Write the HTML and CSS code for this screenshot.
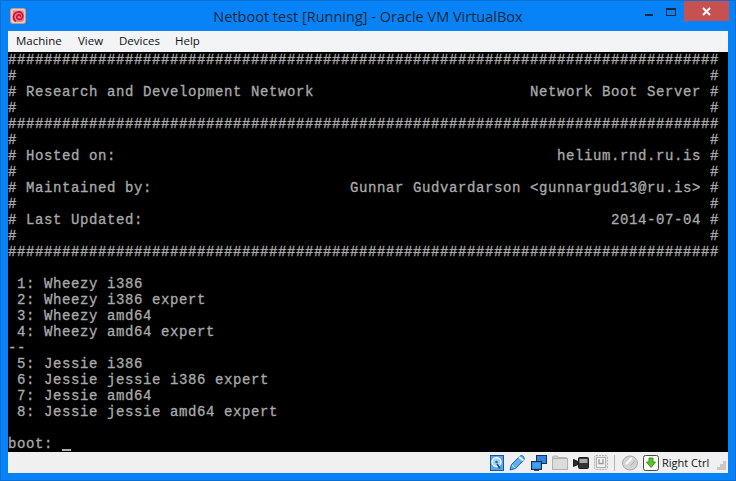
FILE: index.html
```html
<!DOCTYPE html>
<html lang="en">
<head>
<meta charset="utf-8">
<title>Netboot test [Running] - Oracle VM VirtualBox</title>
<link rel="stylesheet" href="styles.css">
</head>
<body>
<div class="window">
  <header class="titlebar">
    <svg class="app-icon" viewBox="0 0 16 16" width="16" height="16">
      <rect x="0.5" y="0.5" width="15" height="15" rx="2" fill="#eccabc" stroke="#b8a08f"/>
      <path d="M3 2.5h10l1 3v7l-2 1.5H5L2.500 12z" fill="#e2848a"/>
      <path d="M5.800 13.300C3.600 11.500 3 8.800 4.300 6.400C5.700 3.900 9.200 3.100 11.300 4.800C13.300 6.400 13.300 9.400 11.500 10.800C9.900 12 7.500 11.500 6.900 9.700C6.400 8.200 7.500 6.700 9 6.800C10.200 6.900 10.900 8.100 10.300 9.100" fill="none" stroke="#d10d3f" stroke-width="1.700"/>
    </svg>
    <h1 class="title">Netboot test [Running] - Oracle VM VirtualBox</h1>
    <div class="controls">
      <span class="min"></span>
      <span class="max"></span>
      <span class="close"><svg viewBox="0 0 9 9" width="9" height="9"><path d="M1 1l7 7M8 1l-7 7" stroke="#fff" stroke-width="2"/></svg></span>
    </div>
  </header>
  <nav class="menubar">
    <span class="m-machine">Machine</span><span class="m-view">View</span><span class="m-devices">Devices</span><span>Help</span>
  </nav>
  <main class="console"><pre class="screen">###############################################################################
#                                                                             #
# Research and Development Network                        Network Boot Server #
#                                                                             #
###############################################################################
#                                                                             #
# Hosted on:                                                 helium.rnd.ru.is #
#                                                                             #
# Maintained by:                      Gunnar Gudvardarson &lt;gunnargud13@ru.is&gt; #
#                                                                             #
# Last Updated:                                                    2014-07-04 #
#                                                                             #
###############################################################################

 1: Wheezy i386
 2: Wheezy i386 expert
 3: Wheezy amd64
 4: Wheezy amd64 expert
--
 5: Jessie i386
 6: Jessie jessie i386 expert
 7: Jessie amd64
 8: Jessie jessie amd64 expert

boot: <span class="cursor"></span></pre></main>
  <footer class="statusbar">
    <svg class="ic hd" viewBox="0 0 14 16" width="14" height="16">
      <rect x="0.5" y="0.500" width="13" height="15" fill="#5aa6e6" stroke="#0f5aa8"/>
      <circle cx="6.500" cy="7" r="4.500" fill="#a8d4f6" stroke="#fff" stroke-width="1.300"/>
      <circle cx="6.500" cy="7" r="1.300" fill="#1c68b8"/>
      <path d="M7 9l3 4.500" stroke="#0f4f94" stroke-width="1.600"/>
    </svg>
    <svg class="ic" viewBox="0 0 17 17" width="17" height="17">
      <path d="M1 16l1.500-5.500L10.500 2.500c1.200-1.200 3-1.200 4 0s1 2.800 0 3.800L6.500 14.500z" fill="#5fb0f0" stroke="#1260b4"/>
      <path d="M10 3l4.500 3.500" stroke="#e8f4ff" stroke-width="2"/>
      <path d="M3 11l3 3" stroke="#d8ecff"/>
    </svg>
    <svg class="ic" viewBox="0 0 16 16" width="16" height="16">
      <rect x="5.500" y="0.500" width="10" height="8" fill="#2f86dc" stroke="#1a2f55"/>
      <rect x="0.500" y="6.500" width="10" height="8" fill="#2f8ae4" stroke="#1a2f55"/>
      <rect x="2" y="8" width="7" height="5" fill="#3fa0f4"/>
      <path d="M3 15.500h5" stroke="#444"/>
    </svg>
    <svg class="ic" viewBox="0 0 16 15" width="16" height="15">
      <path d="M0.500 3.500V2l1-1h4l1 1.500h8v2z" fill="#cfcfcf" stroke="#b5b5b5"/>
      <rect x="0.500" y="3.500" width="15" height="11" fill="#dcdcdc" stroke="#b0b0b0"/>
    </svg>
    <svg class="ic" viewBox="0 0 16 12" width="16" height="12">
      <rect x="5.500" y="0.500" width="10" height="11" rx="1" fill="#333" stroke="#1c1c1c"/>
      <rect x="6.500" y="2" width="8" height="4" fill="#a8a8a8"/>
      <path d="M0.500 2.500v7L5 7.500v-3z" fill="#2a2a2a" stroke="#1c1c1c"/>
    </svg>
    <svg class="ic" viewBox="0 0 14 15" width="14" height="15">
      <rect x="0.500" y="0.500" width="13" height="14" rx="1.500" fill="#e6e6e6" stroke="#b4b4b4" stroke-dasharray="2 1"/>
      <rect x="2.500" y="2.500" width="9" height="10" fill="#f2f2f2" stroke="#b0b0b0"/>
      <path d="M5 4v4.500h4V4" fill="none" stroke="#9a9a9a" stroke-width="1.300"/>
    </svg>
    <span class="sep"></span>
    <svg class="ic mouse" viewBox="0 0 16 16" width="16" height="16">
      <ellipse cx="8" cy="8" rx="7.500" ry="7" fill="#d4d4d4" stroke="#a8a8a8"/>
      <path d="M4 9l6-6" stroke="#fff" stroke-width="1.800"/>
      <path d="M8 11l5-5" stroke="#aeaeae"/>
    </svg>
    <svg class="ic key" viewBox="0 0 16 16" width="16" height="16">
      <rect x="0.500" y="0.500" width="15" height="15" rx="2" fill="#fafafa" stroke="#4a4a4a"/>
      <path d="M6 3h4v4h2.500L8 12.500 3.500 7H6z" fill="#58c81e" stroke="#2c7a10" stroke-width="0.800"/>
    </svg>
    <span class="hostkey">Right Ctrl</span>
    <svg class="grip" viewBox="0 0 9 9" width="9" height="9">
      <path d="M6 0h3v3H6zM3 3h3v3H3zM6 3h3v3H6zM0 6h3v3H0zM3 6h3v3H3zM6 6h3v3H6z" fill="#c8c8c8"/>
    </svg>
  </footer>
</div>
</body>
</html>
```
FILE: styles.css
```css
* { box-sizing: border-box; }
html, body { margin: 0; padding: 0; }
body { background: #0783f7; }
.window {
  width: 736px;
  height: 481px;
  display: flex;
  flex-direction: column;
  background: #0783f7;
  border: 1px solid #0a6fd0;
  padding: 0 7px 7px;
  overflow: hidden;
}
.titlebar {
  height: 30px;
  flex: none;
  display: flex;
  align-items: flex-start;
  position: relative;
}
.app-icon { margin: 7px 0 0 2px; flex: none; }
.title {
  position: absolute;
  left: 0;
  right: 0;
  top: 6px;
  margin: 0;
  text-align: center;
  font: 400 14.500px/20px "Open Sans", "Noto Sans", sans-serif;
  color: #16283a;
}
.controls {
  margin-left: auto;
  display: flex;
  align-items: flex-start;
  position: relative;
}
.min { width: 8px; height: 2px; background: #1a2a3c; margin: 13px 13px 0 0; }
.max { width: 10px; height: 8px; border: 1px solid #1a2a3c; border-top-width: 2px; margin: 7px 8px 0 0; }
.close {
  width: 45px;
  height: 20px;
  background: #c75050;
  display: flex;
  align-items: center;
  justify-content: center;
  margin-right: -1px;
}
.menubar {
  height: 21px;
  flex: none;
  background: #f3f4f6;
  display: flex;
  align-items: center;
  padding: 0 0 1px 8px;
  font: 11.500px/20px "Open Sans", "Noto Sans", sans-serif;
  color: #111;
}
.m-machine { width: 62px; }
.m-view { width: 41px; }
.m-devices { width: 56px; }
.console {
  height: 400px;
  flex: none;
  background: #000;
  overflow: hidden;
}
.screen {
  margin: 0;
  font: 14px/16px "Liberation Mono", monospace;
  letter-spacing: 0.600px;
  -webkit-text-stroke: 0.300px #aaa;
  color: #aaa;
}
.cursor {
  display: inline-block;
  width: 9px;
  height: 2px;
  background: #aaa;
  vertical-align: -3px;
}
.statusbar {
  flex: 1;
  min-height: 0;
  background: #f0f0f0;
  display: flex;
  align-items: center;
  padding-left: 482px;
  font: 11px/16px "Open Sans", "Noto Sans", sans-serif;
  color: #111;
}
.ic { flex: none; margin-right: 5px; }
.sep { width: 1px; height: 16px; background: #b5b5b5; margin: 0 7px 0 1px; flex: none; }
.mouse { margin-right: 5px; }
.key { margin-right: 3px; }
.hostkey { white-space: nowrap; }
.grip { margin: 6px 2px 0 auto; flex: none; }
```
